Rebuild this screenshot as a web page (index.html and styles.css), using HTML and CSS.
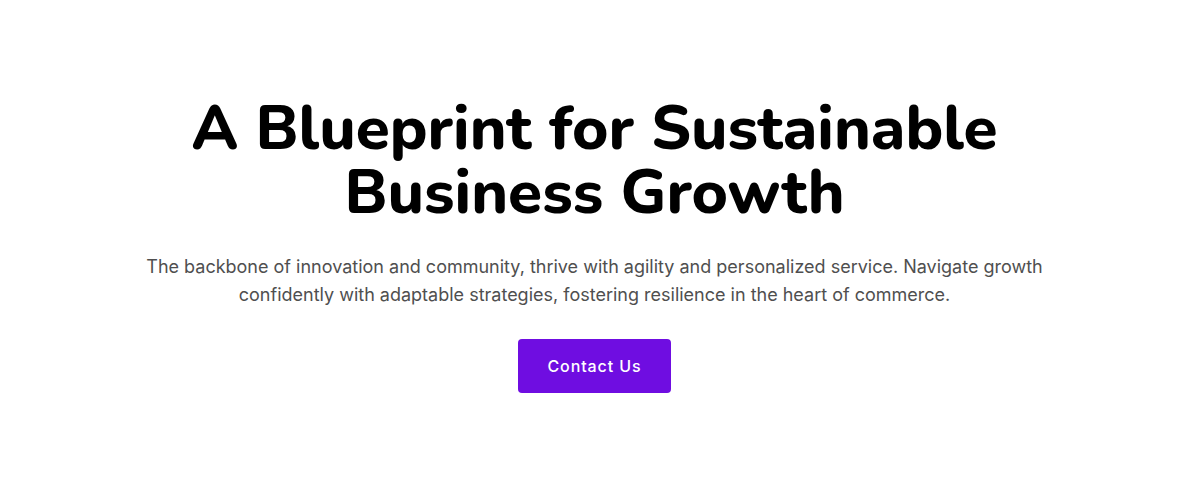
FILE: index.html
```html
<!DOCTYPE html>
<html>
<head>
<meta charset="utf-8">
<link rel="stylesheet" href="styles.css">
</head>
<body>
<section class="hero">
  <h1 class="title">A Blueprint for Sustainable<br>Business Growth</h1>
  <p class="lead">The backbone of innovation and community, thrive with agility and personalized service. Navigate growth confidently with adaptable strategies, fostering resilience in the heart of commerce.</p>
  <a class="btn" href="#">Contact Us</a>
</section>
</body>
</html>
```
FILE: styles.css
```css
html, body {
  margin: 0;
  padding: 0;
  background: #ffffff;
}
.hero {
  display: flex;
  flex-direction: column;
  align-items: center;
  text-align: center;
  padding-top: 97px;
  padding-right: 7px;
}
.title {
  margin: 0;
  font-family: "Nunito", "Lato", "Inter", sans-serif;
  font-weight: 800;
  font-size: 62px;
  line-height: 64px;
  color: #000;
  letter-spacing: 0;
}
.lead {
  margin: 28px 0 0;
  max-width: 910px;
  font-family: "Inter", sans-serif;
  font-size: 18px;
  line-height: 28px;
  color: #4f4f4f;
}
.btn {
  margin-top: 30px;
  display: inline-flex;
  align-items: center;
  justify-content: center;
  width: 153px;
  height: 54px;
  background: #6f0de1;
  color: #fff;
  border-radius: 4px;
  font-family: "Inter", sans-serif;
  font-weight: 500;
  font-size: 16px;
  letter-spacing: 0.9px;
  text-decoration: none;
}
```
